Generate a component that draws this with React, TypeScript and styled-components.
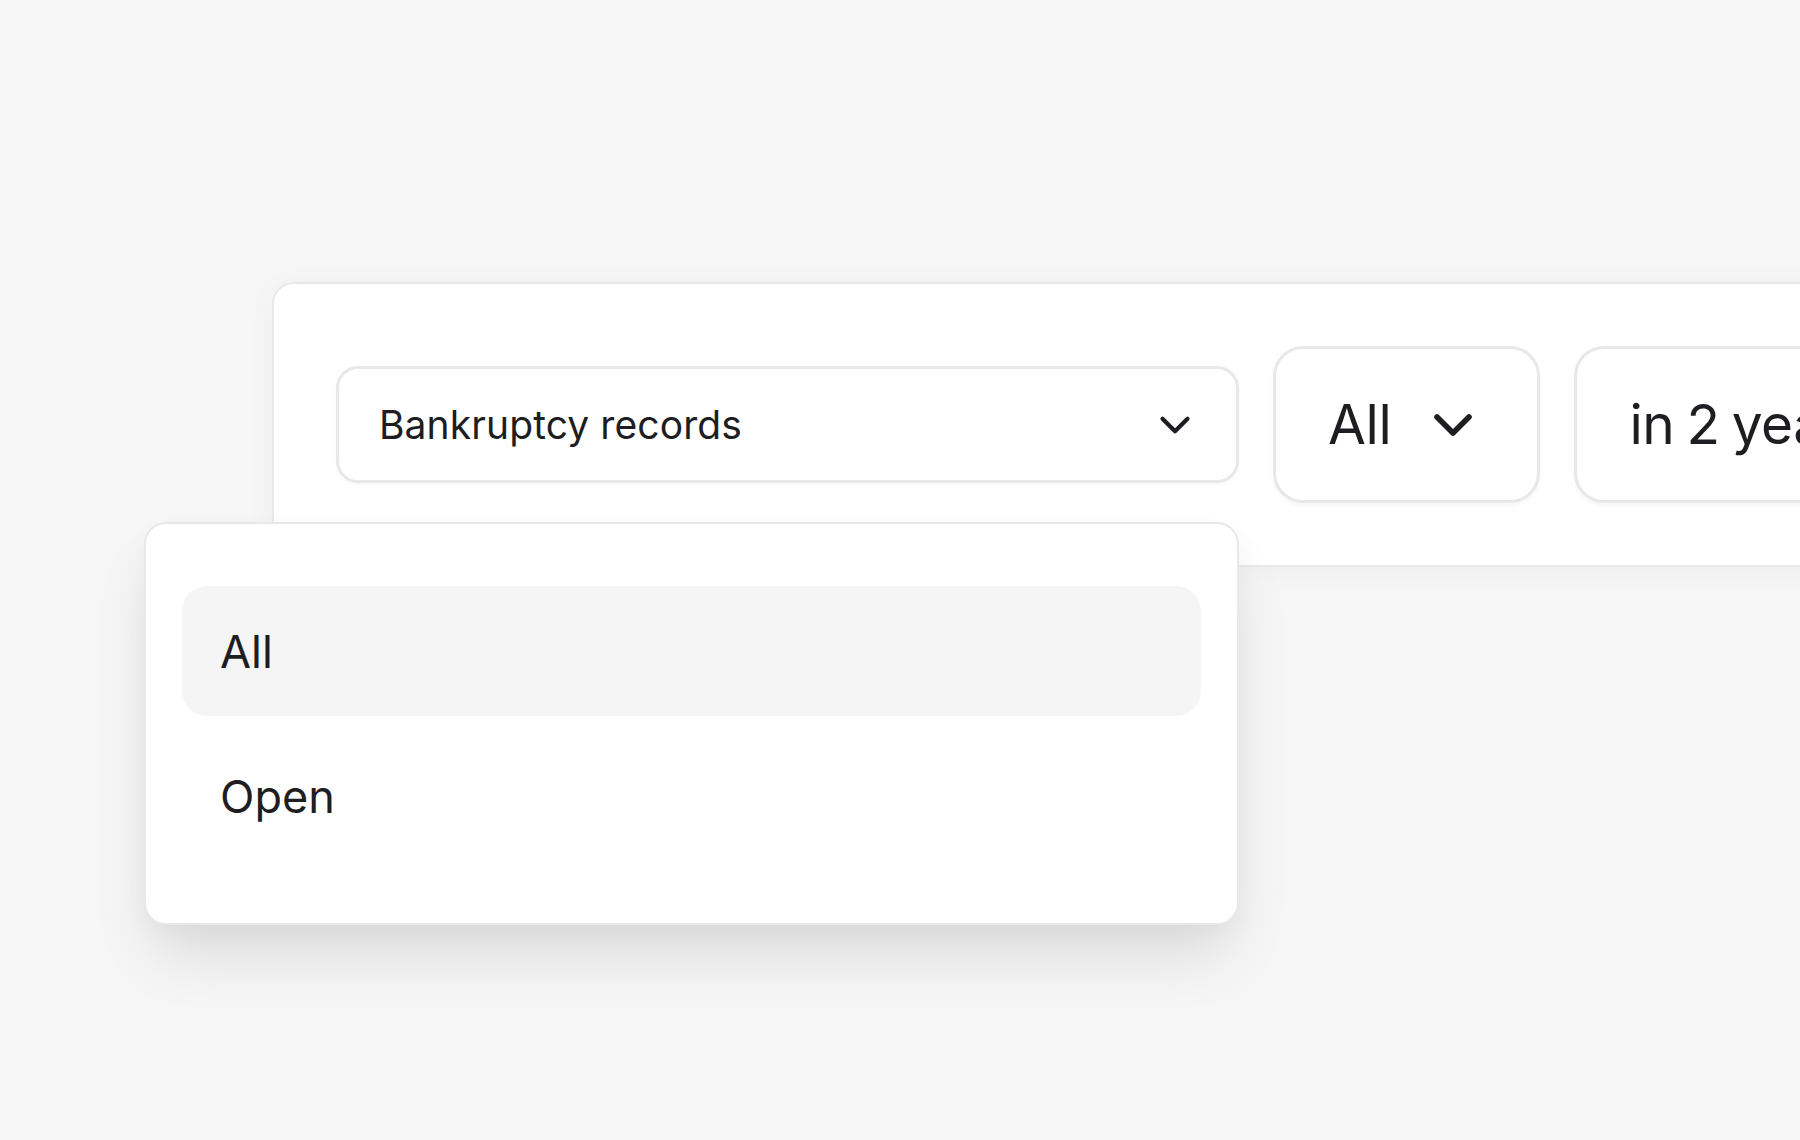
import React from "react";
import styled, { createGlobalStyle } from "styled-components";
import { ChevronDown } from "lucide-react";

const GlobalStyle = createGlobalStyle`
  html, body {
    margin: 0;
    padding: 0;
    background: #f6f6f6;
    overflow: hidden;
  }
  * { box-sizing: border-box; }
  body {
    font-family: Inter, "Noto Sans", "Liberation Sans", sans-serif;
    color: #1d1d22;
  }
`;

const Page = styled.div`
  width: 1800px;
  height: 1140px;
  overflow: hidden;
  padding: 282px 0 0 272px;
`;

const FilterCard = styled.div`
  width: max-content;
  display: flex;
  align-items: center;
  gap: 34px;
  padding: 62px 62px;
  background: #ffffff;
  border: 2px solid #e8e8e8;
  border-radius: 22px;
  box-shadow: 0 4px 30px rgba(0, 0, 0, 0.035);
`;

const FieldWrap = styled.div`
  position: relative;
`;

const Field = styled.div`
  width: 903px;
  height: 117px;
  display: flex;
  align-items: center;
  justify-content: space-between;
  padding: 0 36px 0 40px;
  border: 3px solid #e8e8e8;
  border-radius: 22px;
  background: #fff;
  box-shadow: 0 2px 3px rgba(0, 0, 0, 0.03);
  font-size: 39px;
  letter-spacing: 0.1px;
`;

const PillButton = styled.div`
  height: 157px;
  display: flex;
  align-items: center;
  gap: 30px;
  padding: 0 52px 0 52px;
  border: 3px solid #e8e8e8;
  border-radius: 30px;
  background: #fff;
  box-shadow: 0 3px 4px rgba(0, 0, 0, 0.035);
  font-size: 55px;
  letter-spacing: -0.4px;
  word-spacing: -3px;
  white-space: nowrap;
`;

const Label = styled.span`
  line-height: 1;
  white-space: nowrap;
`;

const Menu = styled.div`
  position: absolute;
  z-index: 2;
  top: calc(100% + 39px);
  right: 0;
  width: 1095px;
  display: flex;
  flex-direction: column;
  gap: 15px;
  padding: 62px 36px;
  background: #fff;
  border: 2px solid #e8e8e8;
  border-radius: 22px;
  box-shadow: 0 38px 64px -12px rgba(0, 0, 0, 0.12),
    0 8px 24px rgba(0, 0, 0, 0.03);
`;

const MenuItem = styled.div<{ $active?: boolean }>`
  height: 130px;
  display: flex;
  align-items: center;
  padding-left: 38px;
  border-radius: 25px;
  background: ${(p) => (p.$active ? "#f5f5f5" : "transparent")};
  font-size: 45px;
`;

export default function App() {
  return (
    <>
      <GlobalStyle />
      <Page>
        <FilterCard>
          <FieldWrap>
            <Field>
              <Label>Bankruptcy records</Label>
              <ChevronDown size={50} strokeWidth={2} color="#1d1d22" />
            </Field>
            <Menu>
              <MenuItem $active>All</MenuItem>
              <MenuItem>Open</MenuItem>
            </Menu>
          </FieldWrap>
          <PillButton>
            <Label>All</Label>
            <ChevronDown size={64} strokeWidth={2.1} color="#1d1d22" />
          </PillButton>
          <PillButton>
            <Label>in 2 years</Label>
            <ChevronDown size={64} strokeWidth={2.1} color="#1d1d22" />
          </PillButton>
        </FilterCard>
      </Page>
    </>
  );
}
